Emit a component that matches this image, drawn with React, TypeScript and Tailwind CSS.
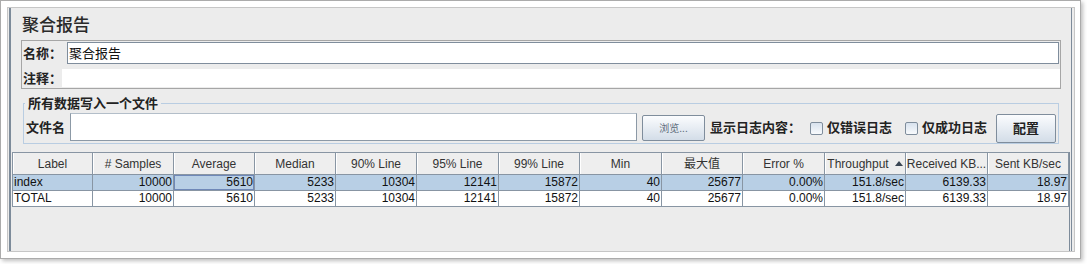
import React from 'react';

const cjk = "font-['Noto_Sans_CJK_SC',sans-serif]";
const latin = "font-['Liberation_Sans','Noto_Sans_CJK_SC',sans-serif]";

const columns = [
  { name: 'Label', width: 'w-[80px]' },
  { name: '# Samples', width: 'w-[81px]' },
  { name: 'Average', width: 'w-[81px]' },
  { name: 'Median', width: 'w-[81px]' },
  { name: '90% Line', width: 'w-[81px]' },
  { name: '95% Line', width: 'w-[82px]' },
  { name: '99% Line', width: 'w-[81px]' },
  { name: 'Min', width: 'w-[82px]' },
  { name: '最大值', width: 'w-[81px]' },
  { name: 'Error %', width: 'w-[82px]' },
  { name: 'Throughput', width: 'w-[81px]' },
  { name: 'Received KB...', width: 'w-[82px]' },
  { name: 'Sent KB/sec', width: 'w-[81px]' },
];

const rows = [
  ['index', '10000', '5610', '5233', '10304', '12141', '15872', '40', '25677', '0.00%', '151.8/sec', '6139.33', '18.97'],
  ['TOTAL', '10000', '5610', '5233', '10304', '12141', '15872', '40', '25677', '0.00%', '151.8/sec', '6139.33', '18.97'],
];

const Checkbox = () => (
  <span className="block h-[13px] w-[13px] rounded-[2px] border border-[#7f8d9c] bg-gradient-to-b from-[#d8e2ee] to-[#f8fafc]" />
);

const App: React.FC = () => {
  return (
    <div className="h-[264px] w-[1087px] bg-white">
      <div className="h-[259px] w-[1081px] border border-[#ababab] bg-white pb-[6px] pl-[6px] pr-[5px] pt-[6px] shadow-[2px_2px_4px_rgba(0,0,0,0.25)]">
        <div className="flex h-full border border-[#c6c6c6] bg-[#ececec]">
          <div className="ml-[1px] w-[2px] bg-[#7d8b9a]" />

          <div className="flex w-[1060px] flex-col">
            {/* title */}
            <div className={`h-[32px] pl-[11px] pt-[3px] text-[17px] font-medium leading-[26px] text-[#2a2a2a] ${cjk}`}>
              聚合报告
            </div>

            {/* name / comment box */}
            <div className={`ml-[10px] h-[49px] w-[1040px] border border-[#a6a6a6] text-[13px] text-[#222] ${cjk}`}>
              <div className="mt-[1px] flex h-[22px] items-center">
                <span className="w-[45px] pl-[1px] font-bold">名称：</span>
                <div className="flex h-[22px] w-[992px] items-center border border-[#7f8d9c] bg-white pl-[1px] text-[13px] text-[#111]">
                  聚合报告
                </div>
              </div>
              <div className="mt-[5px] flex h-[18px] items-center">
                <span className="w-[40px] pl-[1px] font-bold">注释：</span>
                <div className="h-[18px] w-[998px] bg-white" />
              </div>
            </div>

            {/* file box */}
            <fieldset className={`ml-[12px] mt-[7px] h-[48px] w-[1036px] border border-[#b9cde2] text-[13px] text-[#222] ${cjk}`}>
              <legend className="ml-[1px] px-[3px] font-bold leading-[14px]">所有数据写入一个文件</legend>
              <div className="flex h-[33px] items-center">
                <span className="w-[46px] pl-[2px] font-bold">文件名</span>
                <div className="h-[28px] w-[567px] border border-[#8c99a6] border-t-[#b3bec9] bg-white" />
                <button className="ml-[5px] mt-[2px] flex h-[26px] w-[63px] items-center justify-center rounded-[2px] border border-[#7f8d9c] bg-gradient-to-b from-[#fbfcfe] to-[#d3dde8] text-[10px] text-[#5d6c7c]">
                  浏览...
                </button>
                <span className="ml-[5px] w-[100px] font-bold">显示日志内容：</span>
                <span className="mt-[4px]"><Checkbox /></span>
                <span className="ml-[4px] w-[78px] font-bold">仅错误日志</span>
                <span className="mt-[4px]"><Checkbox /></span>
                <span className="ml-[4px] w-[74px] font-bold">仅成功日志</span>
                <button className="mt-[3px] flex h-[29px] w-[60px] items-center justify-center rounded-[2px] border border-[#7f8d9c] bg-gradient-to-b from-[#fbfcfe] to-[#d3dde8] font-bold text-[#222]">
                  配置
                </button>
              </div>
            </fieldset>

            {/* table */}
            <div className={`mt-[8px] flex-1 w-[1059px] border-r border-[#7d8b9a] pl-[1px] text-[12px] ${latin}`}>
              <div className="w-[1057px] border-l border-t border-[#8895a3]">
                <div className="flex h-[22px] bg-[#eeeeee] text-[#333]">
                  {columns.map((c) => (
                    <div
                      key={c.name}
                      className={`${c.width} flex items-center justify-center gap-[6px] border-b border-r border-[#8895a3] shadow-[inset_1px_0_0_#ffffff]`}
                    >
                      <span>{c.name}</span>
                      {c.name === 'Throughput' && (
                        <svg width="8" height="5" viewBox="0 0 8 5">
                          <path d="M0 5 L4 0 L8 5 Z" fill="#3a4654" />
                        </svg>
                      )}
                    </div>
                  ))}
                </div>
                {rows.map((r, ri) => (
                  <div key={ri} className={`flex h-[16px] ${ri === 0 ? 'bg-[#b8cfe5]' : 'bg-white'} text-[#111]`}>
                    {r.map((v, ci) => (
                      <div
                        key={ci}
                        className={`${columns[ci].width} flex items-center border-b border-r border-[#8895a3] px-[1px] leading-[15px] ${ci === 0 ? 'justify-start' : 'justify-end'} ${ri === 0 && ci === 2 ? 'shadow-[inset_0_0_0_1px_#6f88b8]' : ''}`}
                      >
                        {v}
                      </div>
                    ))}
                  </div>
                ))}
              </div>
            </div>
          </div>

          <div className="w-[1px] bg-[#7d8b9a]" />
        </div>
      </div>
    </div>
  );
};

export default App;
